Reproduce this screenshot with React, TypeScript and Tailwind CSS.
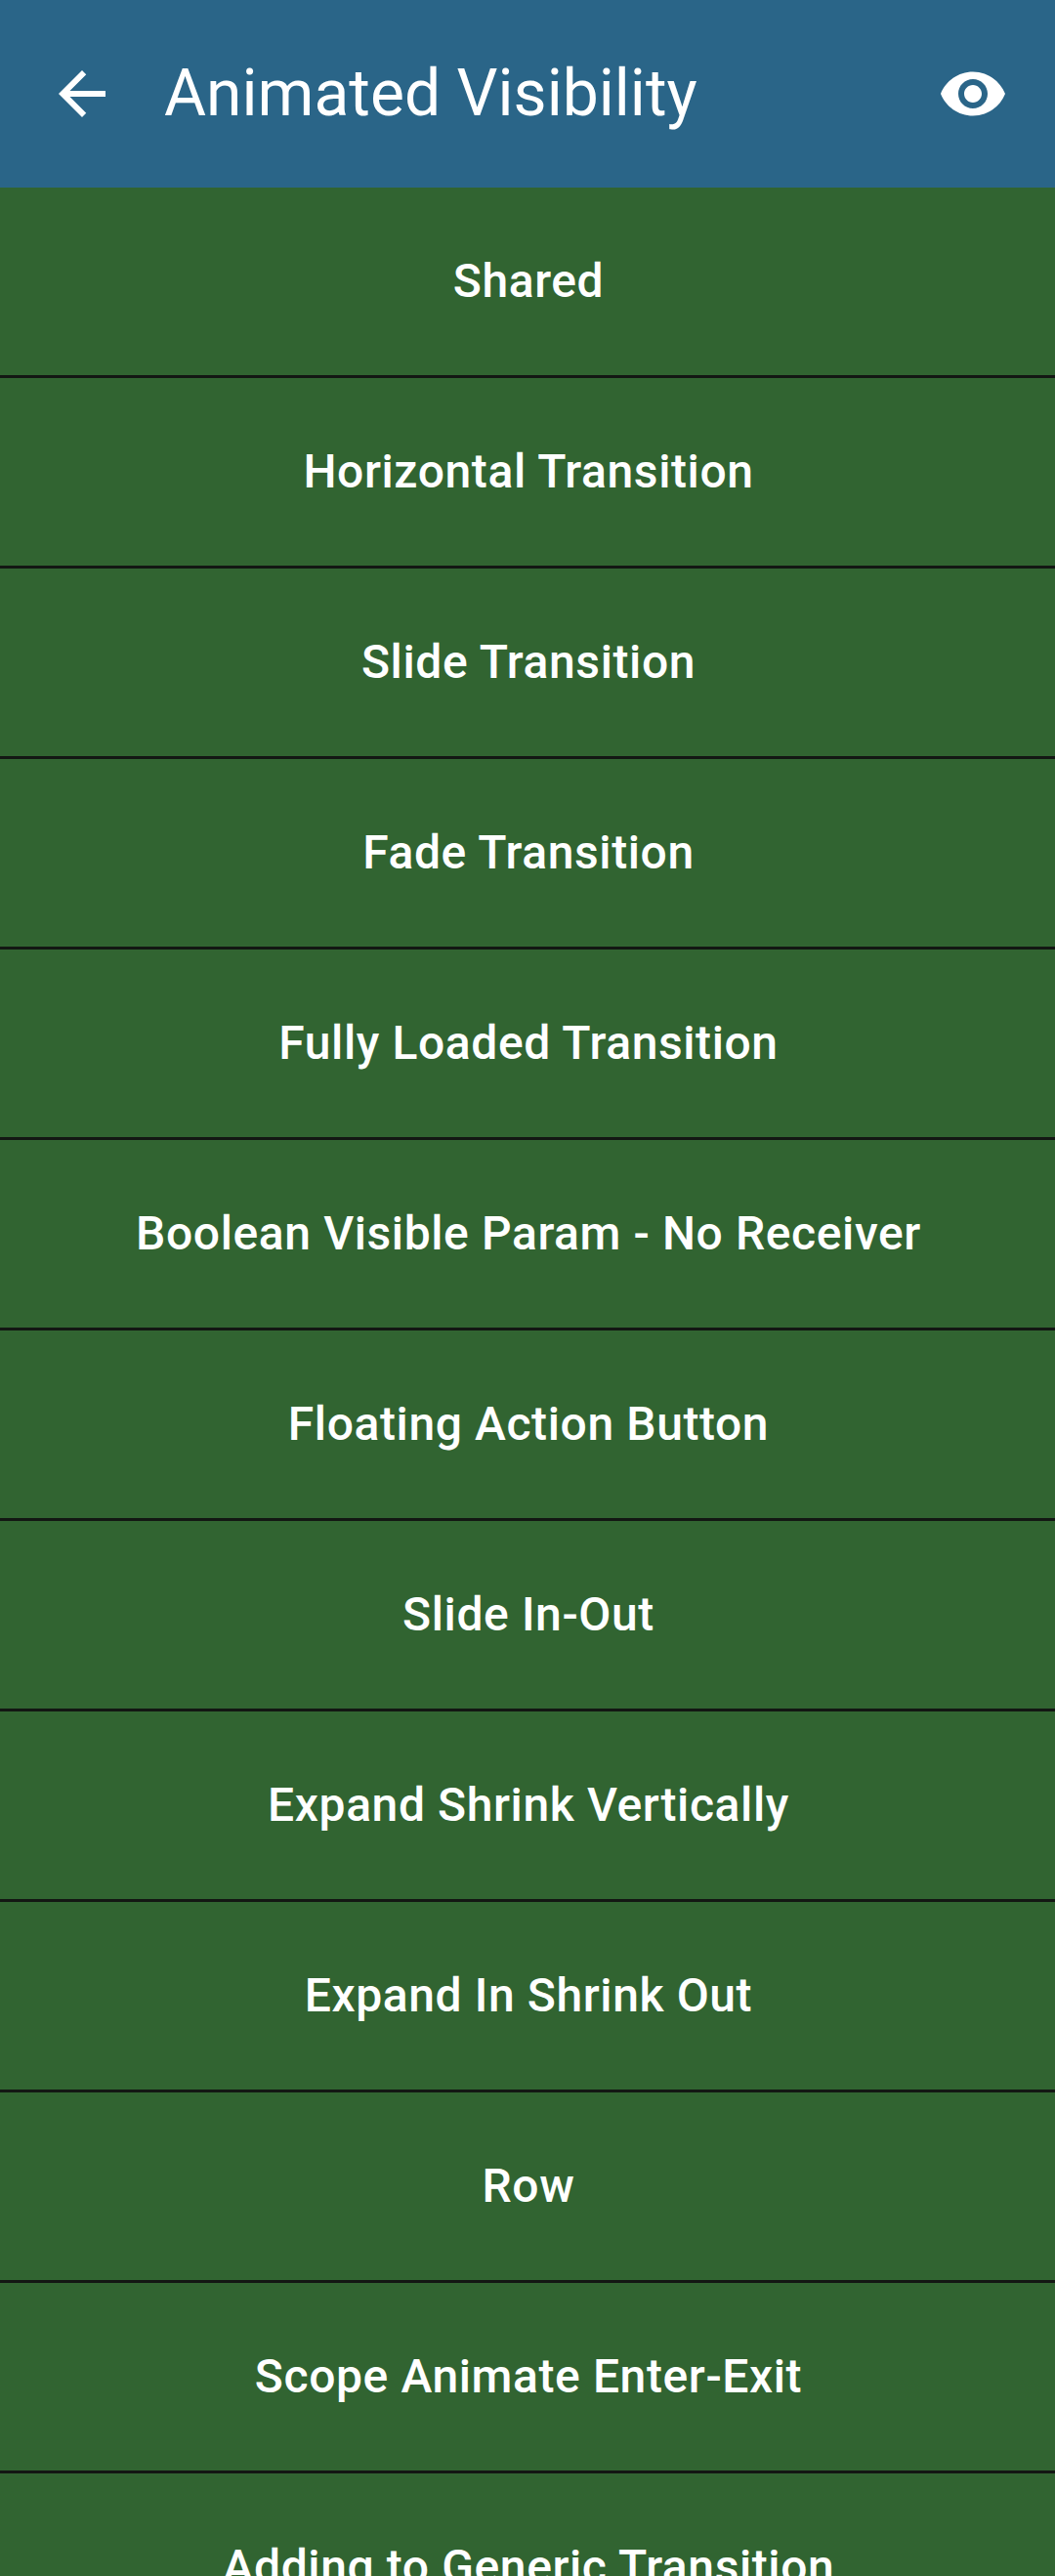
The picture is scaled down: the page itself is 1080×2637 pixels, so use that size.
const items = [
  "Shared",
  "Horizontal Transition",
  "Slide Transition",
  "Fade Transition",
  "Fully Loaded Transition",
  "Boolean Visible Param - No Receiver",
  "Floating Action Button",
  "Slide In-Out",
  "Expand Shrink Vertically",
  "Expand In Shrink Out",
  "Row",
  "Scope Animate Enter-Exit",
  "Adding to Generic Transition",
];

export default function App() {
  return (
    <div className="h-[2637px] w-[1080px] overflow-hidden bg-[#316431] font-['Roboto',sans-serif] text-white">
      <header className="flex h-[192px] items-center bg-[#2a6588] px-[48px]">
        <svg className="size-[72px] shrink-0" viewBox="0 0 24 24" fill="currentColor">
          <path d="M20 11H7.83l5.59-5.59L12 4l-8 8 8 8 1.41-1.41L7.83 13H20v-2z" />
        </svg>
        <h1 className="ml-[48px] flex-1 text-[66px] leading-[84px] font-normal whitespace-nowrap">Animated Visibility</h1>
        <svg className="size-[72px] shrink-0" viewBox="0 0 24 24" fill="currentColor">
          <path d="M12 4.5C7 4.5 2.73 7.61 1 12c1.73 4.39 6 7.5 11 7.5s9.27-3.11 11-7.5c-1.73-4.39-6-7.5-11-7.5zM12 17c-2.76 0-5-2.24-5-5s2.24-5 5-5 5 2.24 5 5-2.24 5-5 5zm0-8c-1.66 0-3 1.34-3 3s1.34 3 3 3 3-1.34 3-3-1.34-3-3-3z" />
        </svg>
      </header>
      <ul>
        {items.map((item) => (
          <li key={item} className="flex h-[195px] items-center justify-center border-b-[3px] border-[#131713] pl-0.5 text-[48px] font-medium tracking-[0.6px] whitespace-nowrap">
            {item}
          </li>
        ))}
      </ul>
    </div>
  );
}
